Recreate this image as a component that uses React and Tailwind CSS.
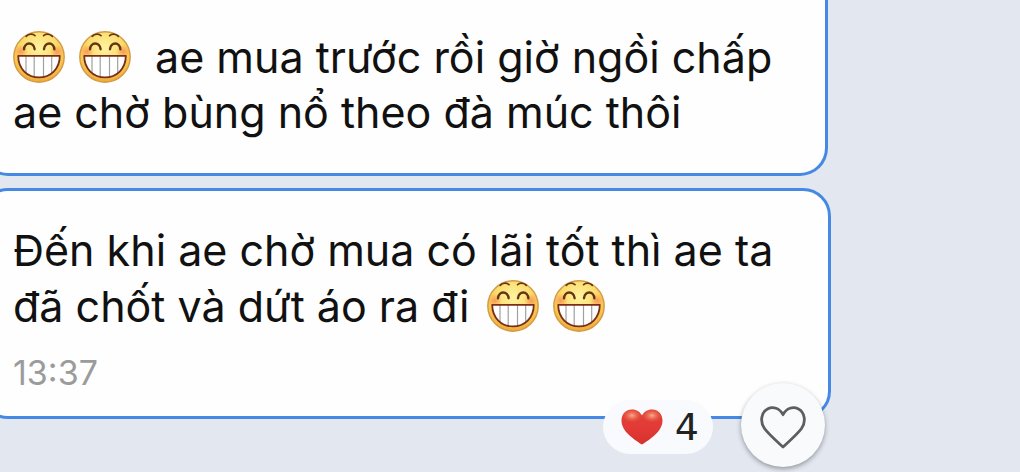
function GrinFace({ id }) {
  return (
    <svg viewBox="0 0 52 52" className="inline-block size-[52px] shrink-0" role="img" aria-label="Grinning face">
      <defs>
        <radialGradient id={id + "-face"} cx="0.5" cy="0.32" r="0.7">
          <stop offset="0" stopColor="#fff3a0" />
          <stop offset="0.5" stopColor="#fbdc6c" />
          <stop offset="0.8" stopColor="#f6c04a" />
          <stop offset="1" stopColor="#eba238" />
        </radialGradient>
        <radialGradient id={id + "-cheek"}>
          <stop offset="0" stopColor="#f5804f" stopOpacity="0.7" />
          <stop offset="1" stopColor="#f5804f" stopOpacity="0" />
        </radialGradient>
        <clipPath id={id + "-mouth"}>
          <path d="M5.2 24.8H46.8C46.8 38 37.5 46.4 26 46.4S5.2 38 5.2 24.8Z" />
        </clipPath>
      </defs>
      <circle cx="26" cy="26" r="25.2" fill={"url(#" + id + "-face)"} stroke="#d49a45" strokeWidth="1.4" />
      <circle cx="8" cy="20.5" r="7" fill={"url(#" + id + "-cheek)"} />
      <circle cx="44" cy="20.5" r="7" fill={"url(#" + id + "-cheek)"} />
      <g fill="none" stroke="#633514" strokeLinecap="round">
        <path d="M13.2 5.4C15.5 2.8 19.5 2.5 22 4.6M30.6 4.6C33.1 2.5 37.1 2.8 39.4 5.4" strokeWidth="1.7" />
        <path d="M11 18.4C11.500 10.6 20.8 10.6 21.6 18.2M31 18.2C31.8 10.6 40.9 10.6 41.4 18.4" strokeWidth="2.4" />
      </g>
      <path d="M5.2 24.8H46.8C46.8 38 37.5 46.4 26 46.4S5.2 38 5.2 24.8Z" fill="#fff" />
      <g clipPath={"url(#" + id + "-mouth)"} stroke="#a0a0a4" strokeWidth="1.2">
        <path d="M13 25V46M21.2 25V46M30.5 25V46M38.7 25V46" />
      </g>
      <path d="M5.2 24.8H46.8C46.8 38 37.5 46.4 26 46.4S5.2 38 5.2 24.8Z" fill="none" stroke="#7b2d16" strokeWidth="1.8" strokeLinejoin="round" />
    </svg>
  );
}

function RedHeart() {
  return (
    <svg viewBox="0 0 42 36" className="h-9 w-[42px]" aria-hidden="true">
      <defs>
        <linearGradient id="heart-fill" x1="0" y1="0" x2="0" y2="1">
          <stop offset="0" stopColor="#dc4437" />
          <stop offset="0.5" stopColor="#e33a37" />
          <stop offset="1" stopColor="#d6312e" />
        </linearGradient>
        <radialGradient id="heart-shine">
          <stop offset="0" stopColor="#ffc09a" stopOpacity="0.85" />
          <stop offset="1" stopColor="#f4674f" stopOpacity="0" />
        </radialGradient>
      </defs>
      <path d="M21 35.6C14 30.5 .5 23 .5 11.4C.5 4.8 5.2 .4 11 .4C15.5 .4 19.3 2.8 21 6.6C22.7 2.8 26.5 .4 31 .4C36.8 .4 41.5 4.8 41.5 11.4C41.5 23 28 30.5 21 35.6Z" fill="url(#heart-fill)" />
      <ellipse cx="11" cy="6.5" rx="10" ry="7" fill="url(#heart-shine)" />
      <ellipse cx="31" cy="6.5" rx="10" ry="7" fill="url(#heart-shine)" />
    </svg>
  );
}

function OutlineHeart() {
  return (
    <svg viewBox="0 0 46 43" className="mt-1 h-[43px] w-[46px]" fill="none" stroke="#5c5e61" strokeWidth="2.8" strokeLinejoin="round" aria-hidden="true">
      <path d="M23 41C17 35.5 8 27.5 4.5 22.5C-.5 15.5 1.5 6 7.5 2.9C13 .2 19.5 2 23 8.7C26.5 2 33 .2 38.5 2.9C44.5 6 46.5 15.5 41.5 22.5C38 27.5 29 35.5 23 41Z" />
    </svg>
  );
}

export default function App() {
  return (
    <main className="flex min-h-screen flex-col gap-3 overflow-hidden bg-[#e3e7f0] pr-[189px] font-['Inter','Liberation_Sans',sans-serif] text-[#111]">
      <article className="-ml-5 mr-[3px] rounded-b-[28px] border-[3px] border-t-0 border-[#4589e4] bg-[#fefefe] pt-[29px] pb-[34px] pl-[30px]">
        <p className="text-[43px] leading-[54px] whitespace-nowrap">
          <span className="flex h-14 items-center">
            <span className="mr-6 flex gap-[14px]">
              <GrinFace id="a" />
              <GrinFace id="b" />
            </span>
            ae mua trước rồi giờ ngồi chấp
          </span>
          <span className="block">ae chờ bùng nổ theo đà múc thôi</span>
        </p>
      </article>

      <article className="relative -ml-5 rounded-[28px] border-[3px] border-[#4589e4] bg-[#fefefe] pt-[31px] pb-[22px] pl-[30px]">
        <p className="text-[43px] leading-[56px] whitespace-nowrap">
          <span className="block">Đến khi ae chờ mua có lãi tốt thì ae ta</span>
          <span className="flex items-center">
            đã chốt và dứt áo ra đi
            <span className="ml-[18px] flex gap-[14px]">
              <GrinFace id="c" />
              <GrinFace id="d" />
            </span>
          </span>
        </p>
        <time className="mt-[18px] block text-[34px] leading-[42px] text-[#9b9b9b]">13:37</time>

        <div className="absolute right-[3px] -bottom-[51px] flex items-center gap-7">
          <button type="button" aria-label="4 heart reactions" className="mt-1 flex h-[54px] items-center gap-3 rounded-full bg-[#f8fafd] pr-[14px] pl-[18px]">
            <RedHeart />
            <span className="font-['DejaVu_Sans',sans-serif] text-[38px] leading-[54px] text-[#222]">4</span>
          </button>
          <button type="button" aria-label="Add heart reaction" className="flex size-[84px] items-center justify-center rounded-full bg-[#f9fafc] shadow-[0_2px_5px_rgba(0,0,0,0.35)]">
            <OutlineHeart />
          </button>
        </div>
      </article>
    </main>
  );
}
